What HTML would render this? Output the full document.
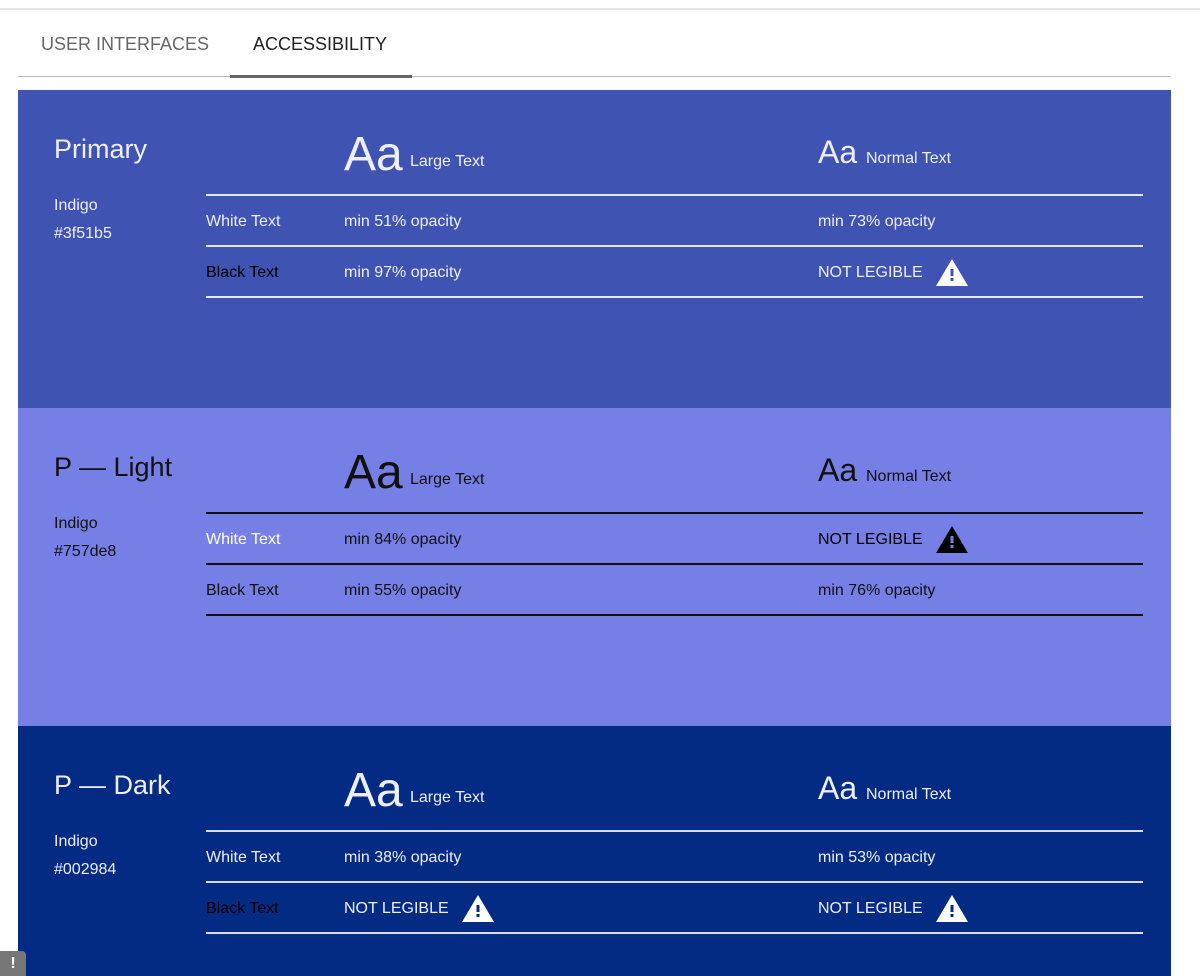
<!DOCTYPE html>
<html><head><meta charset="utf-8"><style>
*{margin:0;padding:0;box-sizing:border-box}
body{width:1200px;height:976px;background:#fff;font-family:"Liberation Sans",sans-serif;position:relative;overflow:hidden}
.abs{position:absolute;white-space:nowrap}
.topline{position:absolute;left:0;top:8px;width:1200px;height:2px;background:#e6e6e6}
.tab{position:absolute;top:34px;font-size:18px;color:#666}
.panel{position:absolute;left:18px;width:1153px;overflow:hidden}
.panel .t{position:absolute;left:36px;font-size:27px;line-height:1}
.panel .s{position:absolute;left:36px;font-size:16px;line-height:1}
.aa{position:absolute;line-height:1}
.ln{position:absolute;left:188px;width:937px;height:2px}
.r{position:absolute;font-size:16px;line-height:1}
svg{position:absolute}
</style></head><body>
<div class="topline"></div>
<div class="tab" style="left:41px">USER INTERFACES</div>
<div class="tab" style="left:253px;color:#222">ACCESSIBILITY</div>
<div class="abs" style="left:18px;top:76px;width:1153px;height:1px;background:#bbb"></div>
<div class="abs" style="left:230px;top:75px;width:182px;height:3px;background:#666"></div>

<!-- Primary -->
<div class="panel" style="top:90px;height:318px;background:#3f53b2;color:#eef">
<div class="t" style="top:46px">Primary</div>
<div class="s" style="top:108px">Indigo</div>
<div class="s" style="top:136px">#3f51b5</div>
<div class="aa" style="left:326px;top:41px;font-size:48px">Aa</div>
<div class="r" style="left:392px;top:64px">Large Text</div>
<div class="aa" style="left:800px;top:46px;font-size:32px">Aa</div>
<div class="r" style="left:848px;top:61px">Normal Text</div>
<div class="ln" style="top:104px;background:#e8e8f4"></div>
<div class="ln" style="top:155px;background:#e8e8f4"></div>
<div class="ln" style="top:206px;background:#e8e8f4"></div>
<div class="r" style="left:188px;top:124px">White Text</div>
<div class="r" style="left:326px;top:124px">min 51% opacity</div>
<div class="r" style="left:800px;top:124px">min 73% opacity</div>
<div class="r" style="left:188px;top:175px;color:#000">Black Text</div>
<div class="r" style="left:326px;top:175px">min 97% opacity</div>
<div class="r" style="left:800px;top:175px">NOT LEGIBLE</div>
<svg style="left:918px;top:169px" width="32" height="27" viewBox="0 0 32 27"><path d="M16 0L32 27H0Z" fill="#fff"/><rect x="14.5" y="10" width="3" height="7" fill="#3f53b2"/><rect x="14.5" y="19" width="3" height="3" fill="#3f53b2"/></svg>
</div>

<!-- Light -->
<div class="panel" style="top:408px;height:318px;background:#767fe5;color:#111">
<div class="t" style="top:46px">P — Light</div>
<div class="s" style="top:108px">Indigo</div>
<div class="s" style="top:136px">#757de8</div>
<div class="aa" style="left:326px;top:41px;font-size:48px">Aa</div>
<div class="r" style="left:392px;top:64px">Large Text</div>
<div class="aa" style="left:800px;top:46px;font-size:32px">Aa</div>
<div class="r" style="left:848px;top:61px">Normal Text</div>
<div class="ln" style="top:104px;background:#111"></div>
<div class="ln" style="top:155px;background:#111"></div>
<div class="ln" style="top:206px;background:#111"></div>
<div class="r" style="left:188px;top:124px;color:#fff">White Text</div>
<div class="r" style="left:326px;top:124px">min 84% opacity</div>
<div class="r" style="left:800px;top:124px;color:#000">NOT LEGIBLE</div>
<svg style="left:918px;top:118px" width="32" height="27" viewBox="0 0 32 27"><path d="M16 0L32 27H0Z" fill="#000"/><rect x="14.5" y="10" width="3" height="7" fill="#767fe5"/><rect x="14.5" y="19" width="3" height="3" fill="#767fe5"/></svg>
<div class="r" style="left:188px;top:175px">Black Text</div>
<div class="r" style="left:326px;top:175px">min 55% opacity</div>
<div class="r" style="left:800px;top:175px">min 76% opacity</div>
</div>

<!-- Dark -->
<div class="panel" style="top:726px;height:250px;background:#032b84;color:#eef">
<div class="t" style="top:46px">P — Dark</div>
<div class="s" style="top:108px">Indigo</div>
<div class="s" style="top:136px">#002984</div>
<div class="aa" style="left:326px;top:41px;font-size:48px">Aa</div>
<div class="r" style="left:392px;top:64px">Large Text</div>
<div class="aa" style="left:800px;top:46px;font-size:32px">Aa</div>
<div class="r" style="left:848px;top:61px">Normal Text</div>
<div class="ln" style="top:104px;background:#d8dcec"></div>
<div class="ln" style="top:155px;background:#d8dcec"></div>
<div class="ln" style="top:206px;background:#d8dcec"></div>
<div class="r" style="left:188px;top:124px">White Text</div>
<div class="r" style="left:326px;top:124px">min 38% opacity</div>
<div class="r" style="left:800px;top:124px">min 53% opacity</div>
<div class="r" style="left:188px;top:175px;color:#000">Black Text</div>
<div class="r" style="left:326px;top:175px">NOT LEGIBLE</div>
<svg style="left:444px;top:169px" width="32" height="27" viewBox="0 0 32 27"><path d="M16 0L32 27H0Z" fill="#fff"/><rect x="14.5" y="10" width="3" height="7" fill="#032b84"/><rect x="14.5" y="19" width="3" height="3" fill="#032b84"/></svg>
<div class="r" style="left:800px;top:175px">NOT LEGIBLE</div>
<svg style="left:918px;top:169px" width="32" height="27" viewBox="0 0 32 27"><path d="M16 0L32 27H0Z" fill="#fff"/><rect x="14.5" y="10" width="3" height="7" fill="#032b84"/><rect x="14.5" y="19" width="3" height="3" fill="#032b84"/></svg>
</div>

<div class="abs" style="left:0;top:951px;width:26px;height:25px;background:#777;border-radius:0 4px 0 0;color:#fff;font-weight:bold;font-size:16px;text-align:center;line-height:25px">!</div>
</body></html>
